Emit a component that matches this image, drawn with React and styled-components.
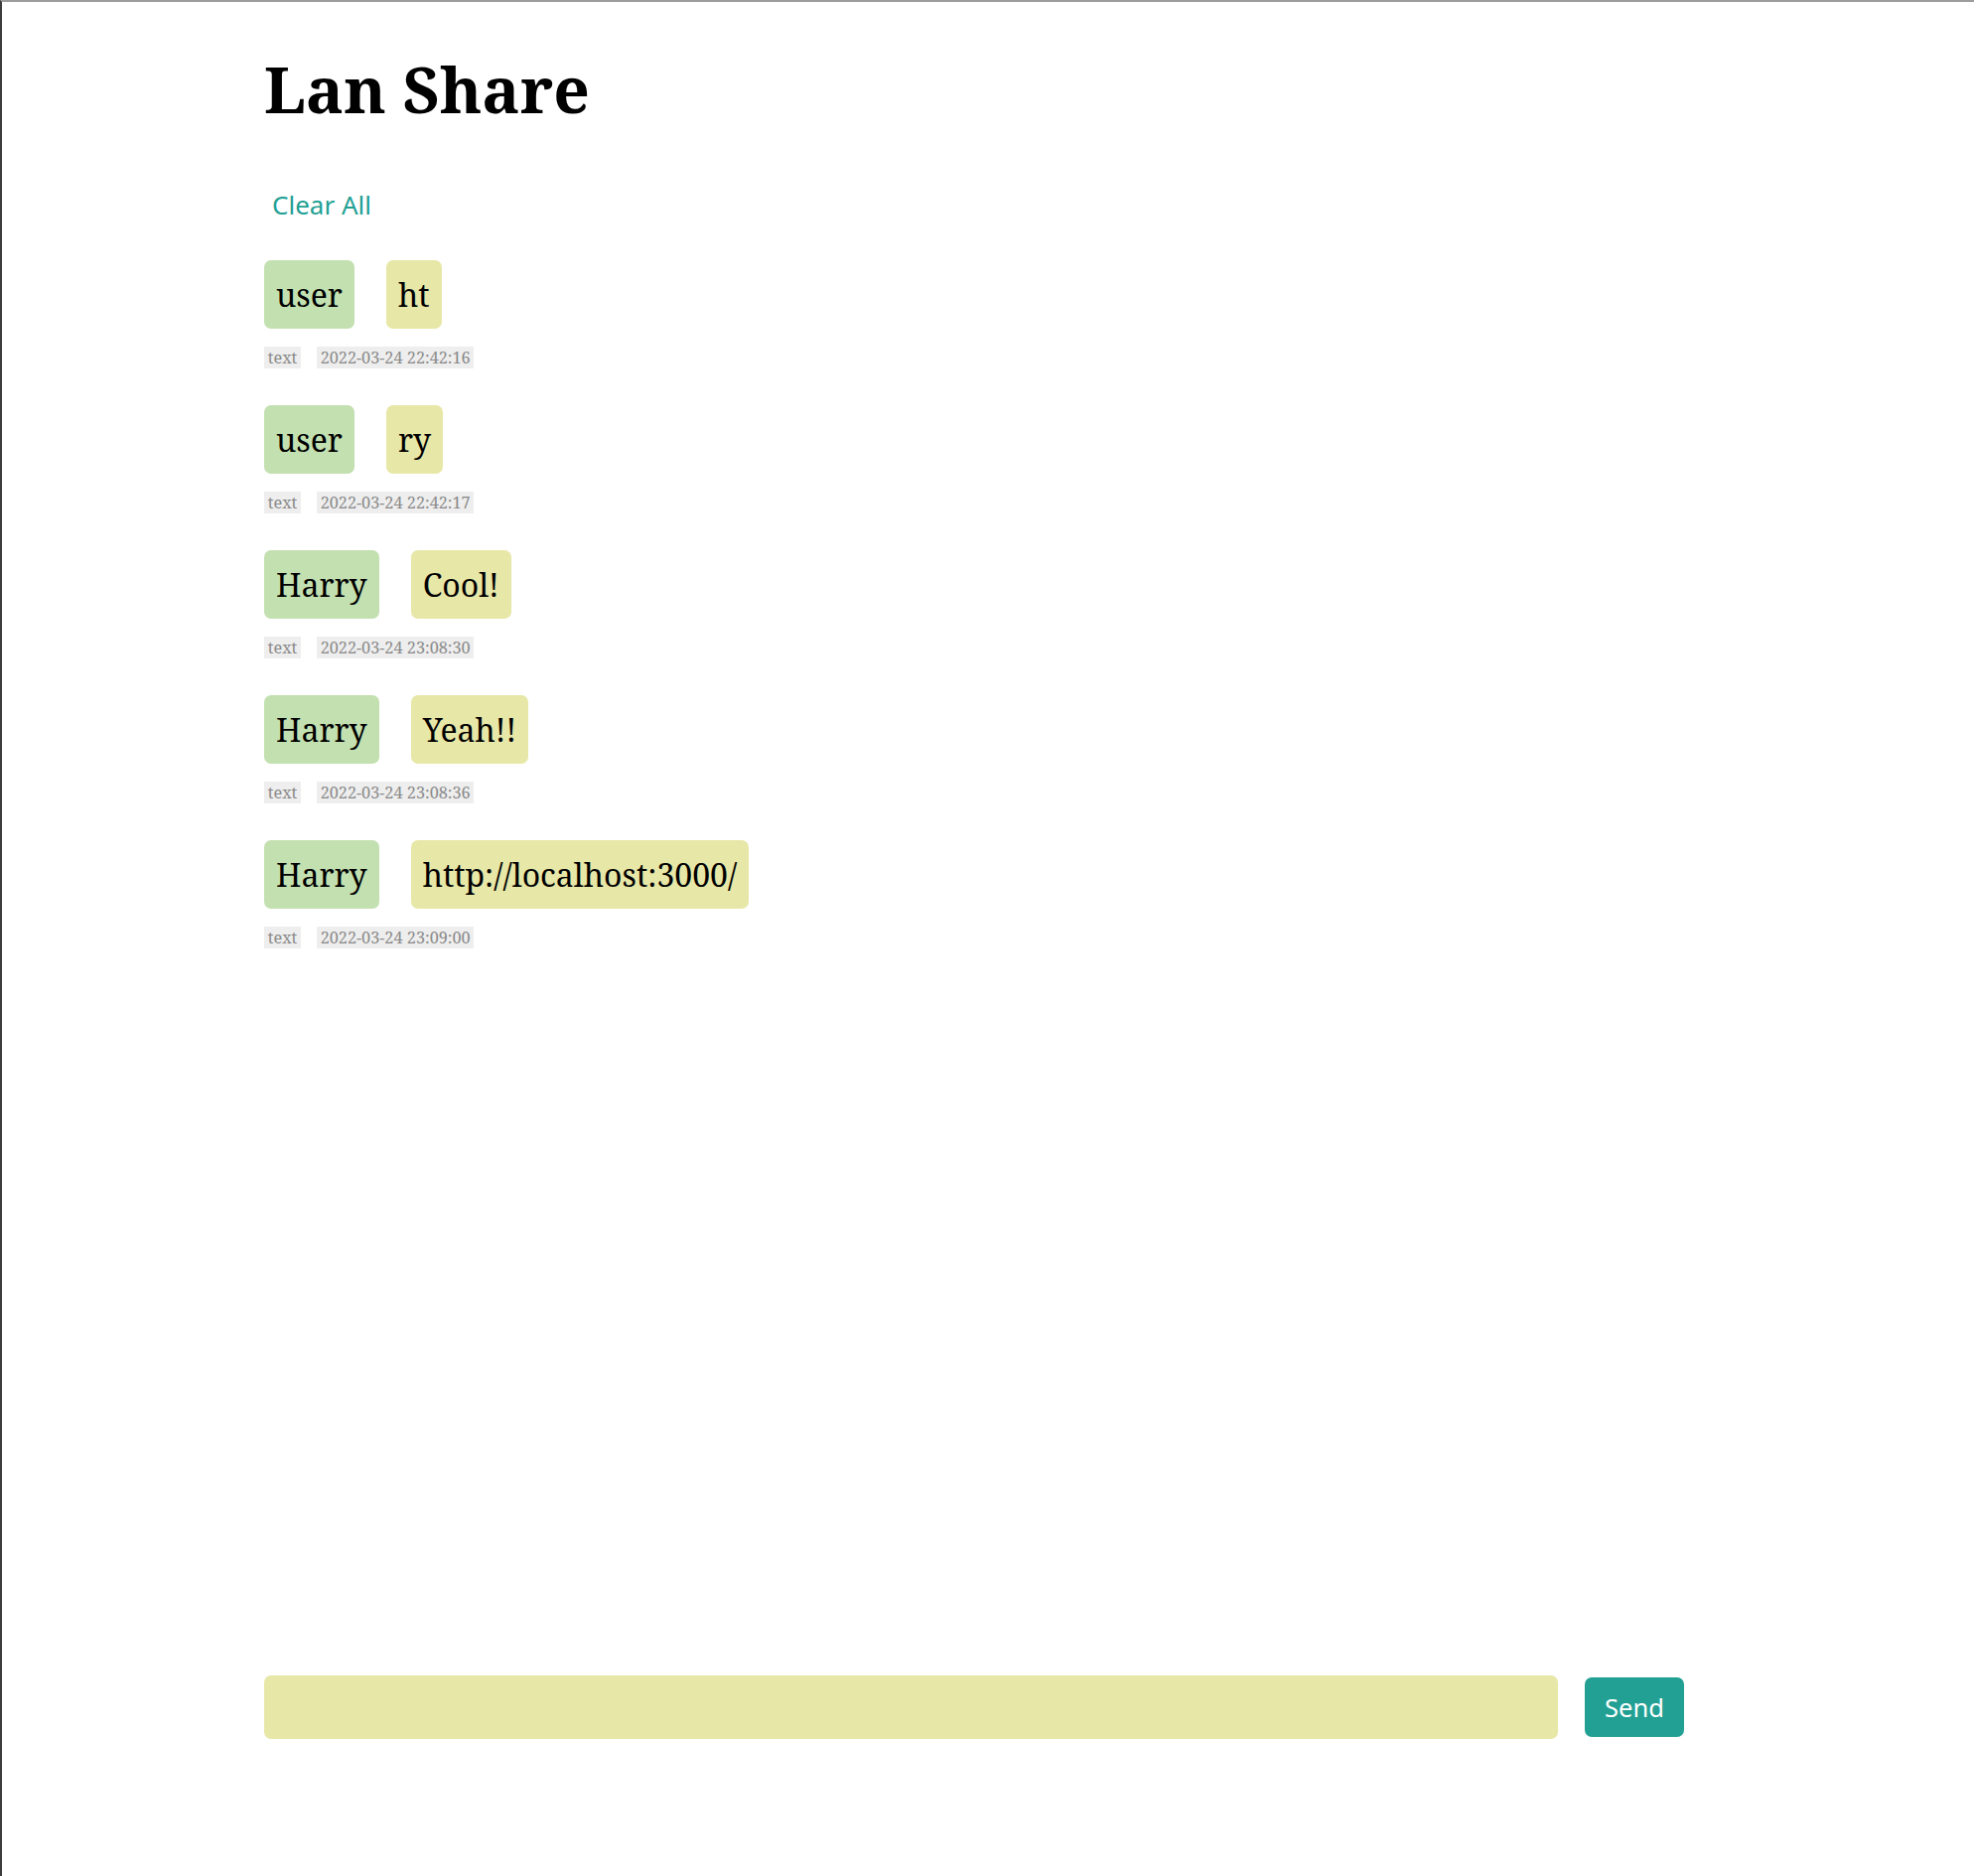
import React from 'react';
import styled, { createGlobalStyle } from 'styled-components';

const GlobalStyle = createGlobalStyle`
  html, body {
    margin: 0;
    padding: 0;
    background: #ffffff;
  }
  body {
    font-family: 'Noto Serif', 'Droid Serif', 'DejaVu Serif', serif;
  }
  * {
    box-sizing: border-box;
  }
`;

const Page = styled.div`
  min-height: 100vh;
  display: flex;
  flex-direction: column;
  border-top: 2px solid #9c9c9c;
  border-left: 2px solid #3c3c3c;
`;

const Main = styled.main`
  flex: 1;
  display: flex;
  flex-direction: column;
  width: 1430px;
  margin-left: 264px;
  padding-top: 46px;
  padding-bottom: 138px;
`;

const Title = styled.h1`
  margin: 0;
  font-size: 64px;
  font-weight: 700;
  line-height: 84px;
  color: #000;
`;

const ClearButton = styled.button`
  align-self: flex-start;
  margin-top: 57px;
  padding: 0 8px;
  border: none;
  background: transparent;
  font-family: 'Noto Sans', 'Open Sans', sans-serif;
  font-size: 26px;
  line-height: 35px;
  color: #22a094;
  cursor: pointer;
`;

const MessageList = styled.ul`
  flex: 1;
  list-style: none;
  margin: 38px 0 0;
  padding: 0;
  display: flex;
  flex-direction: column;
  gap: 37px;
`;

const Message = styled.li`
  display: flex;
  flex-direction: column;
  gap: 17.6px;
`;

const BubbleRow = styled.div`
  display: flex;
  align-items: center;
  gap: 32px;
`;

const Bubble = styled.span`
  display: inline-block;
  padding: 13.5px 12px;
  border-radius: 7px;
  font-size: 32px;
  line-height: 42px;
  color: #000;
  background: ${({ $kind }) => ($kind === 'user' ? '#c3e0b0' : '#e7e7a7')};
`;

const MetaRow = styled.div`
  display: flex;
  align-items: center;
  gap: 16px;
`;

const Tag = styled.span`
  display: inline-block;
  padding: 0 3.7px;
  font-size: 16.3px;
  line-height: 22.4px;
  color: #8a8a8a;
  background: #eeeeee;
`;

const Composer = styled.form`
  display: flex;
  align-items: center;
  gap: 27px;
`;

const Input = styled.input`
  flex: 1;
  height: 64px;
  border: none;
  border-radius: 7px;
  background: #e7e7a7;
  padding: 0 16px;
  font-family: 'Noto Serif', 'DejaVu Serif', serif;
  font-size: 25px;
  outline: none;
`;

const SendButton = styled.button`
  width: 100px;
  height: 60px;
  border: none;
  border-radius: 7px;
  background: #22a094;
  color: #ffffff;
  font-family: 'Noto Sans', 'Open Sans', sans-serif;
  font-size: 25.5px;
  cursor: pointer;
`;

const messages = [
  { user: 'user', text: 'ht', type: 'text', time: '2022-03-24 22:42:16' },
  { user: 'user', text: 'ry', type: 'text', time: '2022-03-24 22:42:17' },
  { user: 'Harry', text: 'Cool!', type: 'text', time: '2022-03-24 23:08:30' },
  { user: 'Harry', text: 'Yeah!!', type: 'text', time: '2022-03-24 23:08:36' },
  { user: 'Harry', text: 'http://localhost:3000/', type: 'text', time: '2022-03-24 23:09:00' }
];

export default function App() {
  return (
    <Page>
      <GlobalStyle />
      <Main>
        <Title>Lan Share</Title>
        <ClearButton type="button">Clear All</ClearButton>
        <MessageList>
          {messages.map(m => (
            <Message key={m.time}>
              <BubbleRow>
                <Bubble $kind="user">{m.user}</Bubble>
                <Bubble $kind="content">{m.text}</Bubble>
              </BubbleRow>
              <MetaRow>
                <Tag>{m.type}</Tag>
                <Tag>{m.time}</Tag>
              </MetaRow>
            </Message>
          ))}
        </MessageList>
        <Composer onSubmit={e => e.preventDefault()}>
          <Input type="text" />
          <SendButton type="submit">Send</SendButton>
        </Composer>
      </Main>
    </Page>
  );
}
